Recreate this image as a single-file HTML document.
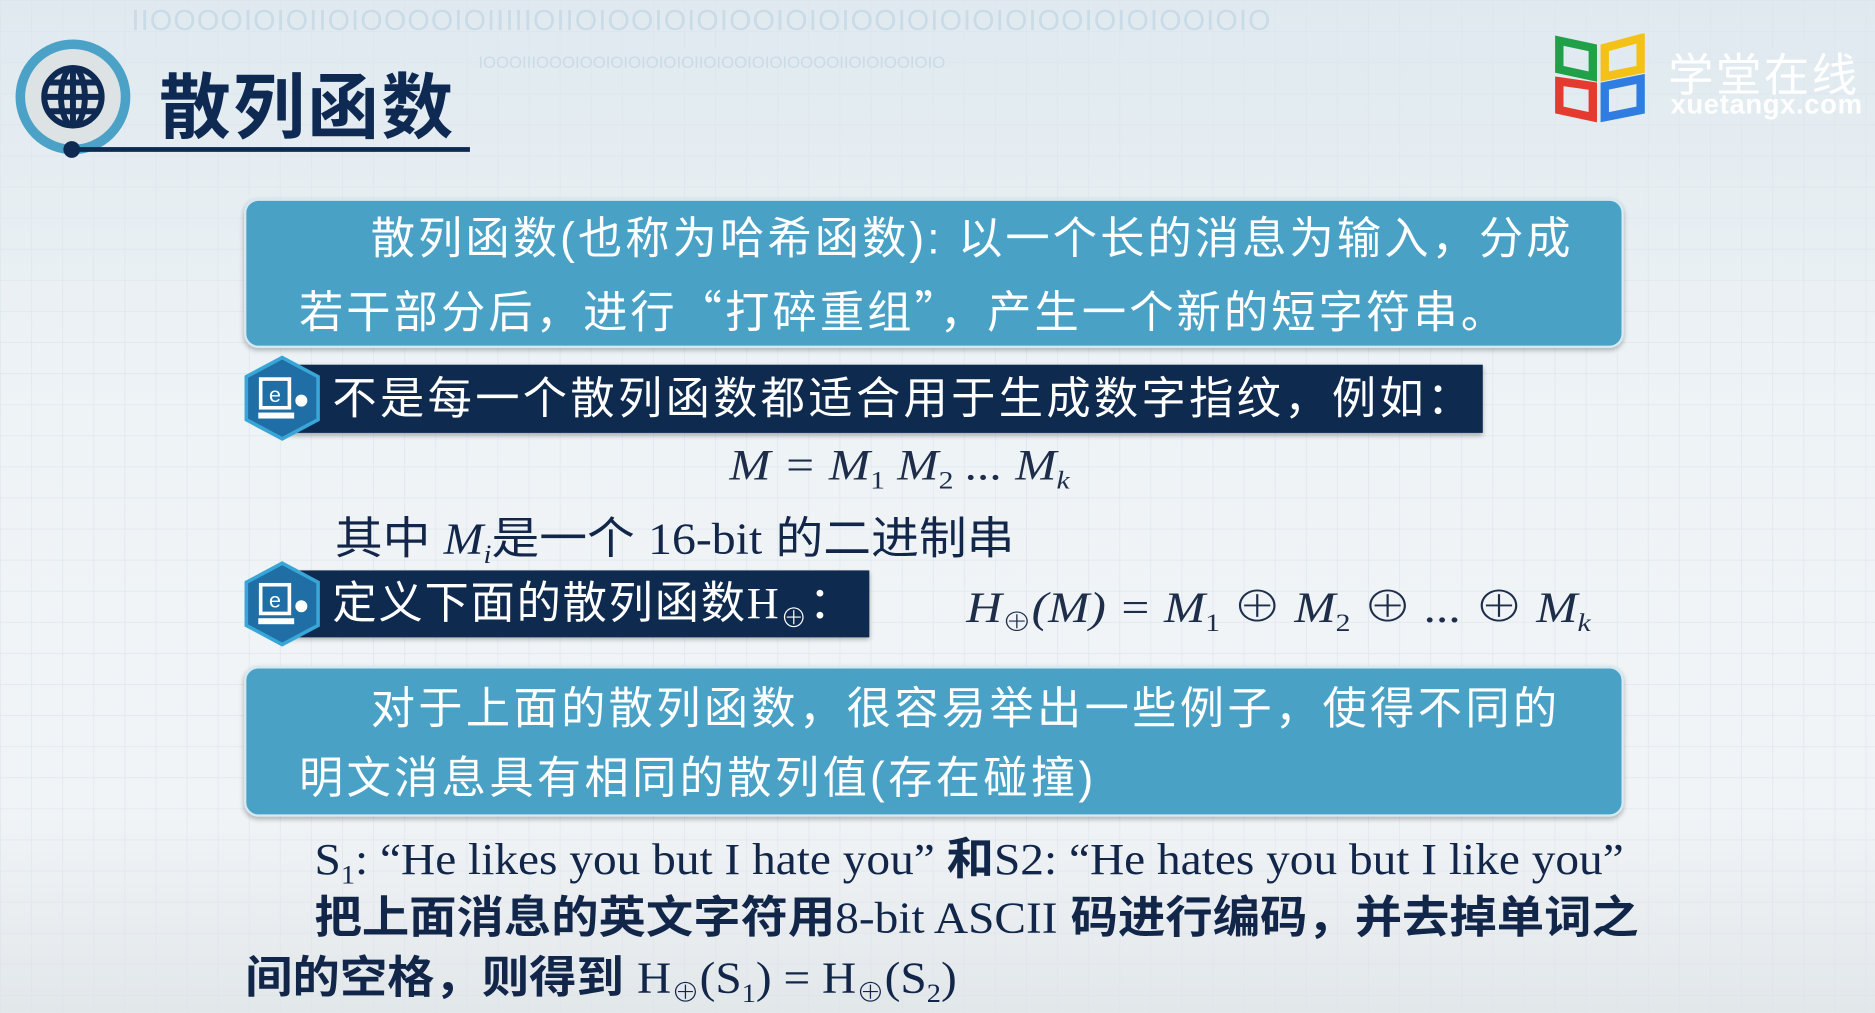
<!DOCTYPE html>
<html><head><meta charset="utf-8"><style>
html,body{margin:0;padding:0;width:1875px;height:1013px;overflow:hidden;background:#e9f0f4}
#s{position:absolute;left:0;top:0;width:1568px;height:847px;transform:scale(1.19579);transform-origin:0 0;
background:linear-gradient(180deg,#dfe9ef 0%,#eef3f6 40%,#f1f4f6 80%,#e2e7ea 100%);
font-family:"Liberation Sans","Noto Sans CJK SC",sans-serif;overflow:hidden}
.grid{position:absolute;inset:0;background-image:linear-gradient(#dbe5eb 1px,transparent 1px),linear-gradient(90deg,#dbe5eb 1px,transparent 1px);background-size:26px 26px;opacity:.6}
.a{position:absolute;white-space:nowrap;transform-origin:0 0}
.box{position:absolute;background:#49a2c6;border:2px solid #d6e9f1;border-radius:12px;box-shadow:0 2px 4px rgba(0,0,0,.25);color:#fff;font-size:37px;line-height:58px}
.bar{position:absolute;background:#0e2a4f;color:#fff;font-size:37px;box-shadow:0 2px 4px rgba(0,0,0,.3)}
.ser{font-family:"Liberation Serif","Noto Serif CJK SC",serif}
.dk{color:#12264a;font-size:37px}
.cj{font-family:"Noto Sans CJK SC",sans-serif}
sub{font-size:60%;vertical-align:-0.35em}
</style></head><body><div id="s">
<div class="grid"></div>
<div class="a" style="left:110px;top:4px;font-size:24px;color:#c9dbe6;letter-spacing:1px">IIOOOOIOIOIIOIOOOOIOIIIIIOIIOIOOIOIOIOOIOIOIOOIOIOIOIOIOOIOIOIOOIOIO</div>
<div class="a" style="left:400px;top:44px;font-size:14px;color:#c9dbe6">IOOOIIIOOOIOOIOIOIOIOIOIIOIOOIOIOIOOOOIIOIOIOOIOIO</div>
<div class="a" style="left:13px;top:33px;width:80px;height:80px;border-radius:50%;border:8px solid #4ba2c6;background:#dde2e5"></div>
<svg class="a" style="left:33px;top:53px" width="56" height="56" viewBox="0 0 56 56"><g fill="none" stroke="#0f2a52" stroke-width="5"><circle cx="28" cy="28" r="24"/><ellipse cx="28" cy="28" rx="10" ry="24"/><line x1="28" y1="4" x2="28" y2="52"/><line x1="4" y1="28" x2="52" y2="28"/><line x1="8" y1="16" x2="48" y2="16"/><line x1="8" y1="40" x2="48" y2="40"/></g></svg>
<div class="a" style="left:60px;top:123px;width:333px;height:4px;background:#0f2a52"></div>
<div class="a" style="left:53px;top:118px;width:14px;height:14px;border-radius:50%;background:#0f2a52"></div>
<div class="a" style="left:133px;top:42px;font-size:60px;font-weight:bold;color:#0f2a52;letter-spacing:2px">散列函数</div>
<svg class="a" style="left:1300px;top:28px" width="80" height="76" viewBox="0 0 80 76"><g fill="none" stroke-width="7"><path d="M4 6 L32 12 L32 36 L4 30Z" stroke="#21a04a"/><path d="M42 12 L72 4 L72 30 L42 36Z" stroke="#f4c217"/><path d="M4 40 L32 44 L32 70 L4 64Z" stroke="#e53a2f"/><path d="M42 44 L72 38 L72 64 L42 70Z" stroke="#2f7de0"/></g></svg>
<div class="a" style="left:1395px;top:32px;font-size:38px;color:#fff;letter-spacing:2px">学堂在线</div>
<div class="a" style="left:1397px;top:74px;font-size:23px;color:#fff;font-weight:bold;letter-spacing:0.5px">xuetangx.com</div>
<div class="box" style="left:204px;top:166px;width:1150px;height:121px"><div style="padding:3px 0 0 44px;text-indent:60px;letter-spacing:2.6px;white-space:nowrap">散列函数(也称为哈希函数): 以一个长的消息为输入，分成<br>若干部分后，进行<span class="cj">“</span>打碎重组<span class="cj">”</span>，产生一个新的短字符串。</div></div>
<div class="bar" style="left:240px;top:305px;width:1000px;height:57px;line-height:57px"><span style="padding-left:38px;letter-spacing:2.8px">不是每一个散列函数都适合用于生成数字指纹，例如：</span></div>
<svg class="a" style="left:202px;top:297px" width="68" height="72" viewBox="0 0 68 72"><path d="M34 2 L64 18 L64 54 L34 70 L4 54 L4 18Z" fill="#1f6fa6" stroke="#39a6d8" stroke-width="3"/><rect x="16" y="20" width="24" height="24" fill="none" stroke="#fff" stroke-width="3"/><text x="28" y="39" fill="#fff" font-size="18" text-anchor="middle" font-family="Liberation Sans">e</text><rect x="14" y="48" width="30" height="5" fill="#fff"/><circle cx="50" cy="38" r="5" fill="#fff"/></svg>
<div class="a ser" style="left:610px;top:368px;font-size:36px;color:#1e2d4a;font-style:italic;transform:scaleX(1.15)">M = M<sub style="font-style:normal">1</sub> M<sub style="font-style:normal">2</sub> ... M<sub>k</sub></div>
<div class="a dk" style="left:280px;top:420px;transform:scaleX(1.08)">其中 <i class="ser">M<sub>i</sub></i>是一个 <span class="ser">16-bit</span> 的二进制串</div>
<div class="bar" style="left:240px;top:477px;width:487px;height:56px;line-height:56px"><span style="padding-left:38px;letter-spacing:1.5px">定义下面的散列函数<span class="ser">H<sub>⊕</sub></span>：</span></div>
<svg class="a" style="left:202px;top:469px" width="68" height="72" viewBox="0 0 68 72"><path d="M34 2 L64 18 L64 54 L34 70 L4 54 L4 18Z" fill="#1f6fa6" stroke="#39a6d8" stroke-width="3"/><rect x="16" y="20" width="24" height="24" fill="none" stroke="#fff" stroke-width="3"/><text x="28" y="39" fill="#fff" font-size="18" text-anchor="middle" font-family="Liberation Sans">e</text><rect x="14" y="48" width="30" height="5" fill="#fff"/><circle cx="50" cy="38" r="5" fill="#fff"/></svg>
<div class="a ser" style="left:808px;top:480px;font-size:36px;color:#1e2d4a;font-style:italic;transform:scaleX(1.15)">H<sub style="font-style:normal">⊕</sub>(M) = M<sub style="font-style:normal">1</sub> <span style="font-style:normal">⊕</span> M<sub style="font-style:normal">2</sub> <span style="font-style:normal">⊕</span> ... <span style="font-style:normal">⊕</span> M<sub>k</sub></div>
<div class="box" style="left:204px;top:557px;width:1150px;height:122px"><div style="padding:5px 0 0 44px;text-indent:60px;letter-spacing:2.8px;white-space:nowrap">对于上面的散列函数，很容易举出一些例子，使得不同的<br>明文消息具有相同的散列值(存在碰撞)</div></div>
<div class="a dk ser" style="left:263px;top:688px;transform:scaleX(1.07)">S<sub>1</sub>: “He likes you but I hate you” <span style="font-family:'Noto Sans CJK SC';font-weight:bold">和</span>S2: “He hates you but I like you”</div>
<div class="a dk" style="left:263px;top:737px;font-weight:bold;transform:scaleX(1.07)">把上面消息的英文字符用<span class="ser" style="font-weight:normal">8-bit ASCII</span> 码进行编码，并去掉单词之</div>
<div class="a dk" style="left:205px;top:787px;font-weight:bold;transform:scaleX(1.07)">间的空格，则得到 <span class="ser" style="font-weight:normal">H<sub>⊕</sub>(S<sub>1</sub>) = H<sub>⊕</sub>(S<sub>2</sub>)</span></div>
</div></body></html>
